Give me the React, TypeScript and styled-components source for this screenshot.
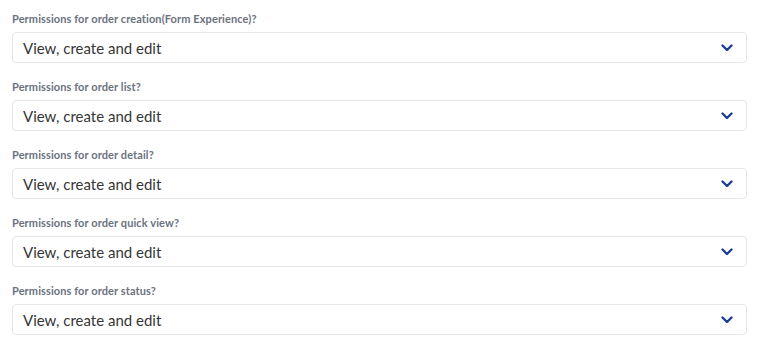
import styled, { createGlobalStyle } from "styled-components";

const GlobalStyle = createGlobalStyle`
    body {
        margin: 0;
        background: #ffffff;
        font-family: Lato, "Noto Sans", sans-serif;
    }
`;

const Wrapper = styled.div`
    padding: 11px 21px 0 12px;
    display: flex;
    flex-direction: column;
    gap: 16px;
`;

const Field = styled.div`
    display: flex;
    flex-direction: column;
    gap: 6px;
`;

const Label = styled.label`
    font-size: 11px;
    font-weight: 700;
    color: #6b7280;
    line-height: 15px;
    letter-spacing: 0.1px;
`;

const Select = styled.div`
    height: 31px;
    box-sizing: border-box;
    border: 1px solid #e6e6e6;
    border-radius: 4px;
    display: flex;
    align-items: center;
    justify-content: space-between;
    padding: 0 13px 0 10px;
    cursor: pointer;
`;

const Value = styled.span`
    font-size: 15px;
    color: #363636;
`;

const Chevron = () => (
    <svg width="12" height="8" viewBox="0 0 12 8">
        <path d="M1.5 1.5 L6 6 L10.5 1.5" fill="none" stroke="#1c3f94" strokeWidth="2.4" strokeLinecap="round" strokeLinejoin="round"/>
    </svg>
);

const fields = [
    "Permissions for order creation(Form Experience)?",
    "Permissions for order list?",
    "Permissions for order detail?",
    "Permissions for order quick view?",
    "Permissions for order status?",
];

export default function App() {
    return (
        <>
            <GlobalStyle/>
            <Wrapper>
                {fields.map((label, i) => (
                    <Field key={i}>
                        <Label>{label}</Label>
                        <Select>
                            <Value>View, create and edit</Value>
                            <Chevron/>
                        </Select>
                    </Field>
                ))}
            </Wrapper>
        </>
    );
}
